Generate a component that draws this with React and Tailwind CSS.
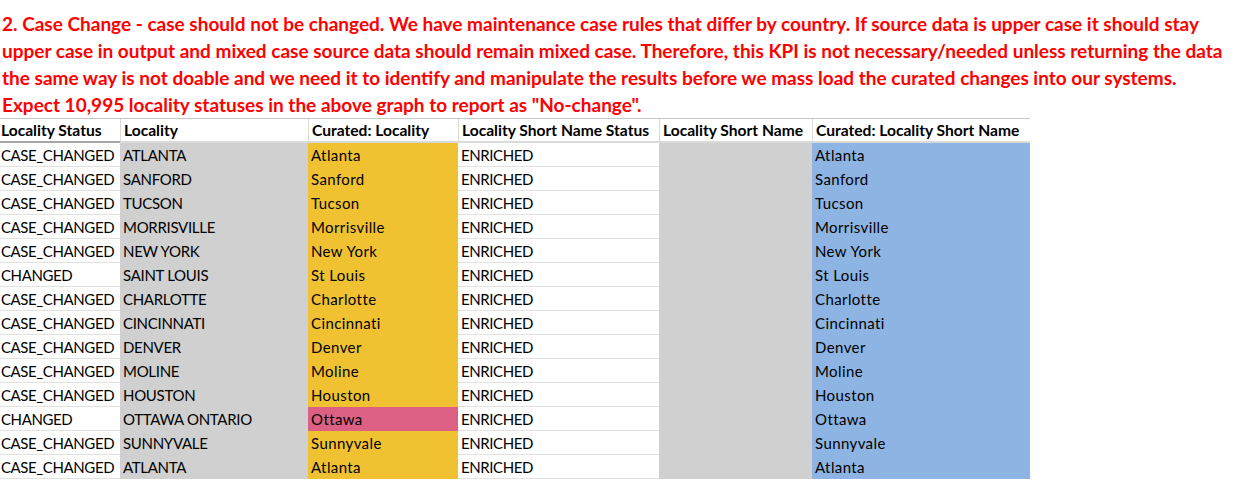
import React from "react";

const rows = [
  ["CASE_CHANGED", "ATLANTA", "Atlanta", "ENRICHED", "", "Atlanta"],
  ["CASE_CHANGED", "SANFORD", "Sanford", "ENRICHED", "", "Sanford"],
  ["CASE_CHANGED", "TUCSON", "Tucson", "ENRICHED", "", "Tucson"],
  ["CASE_CHANGED", "MORRISVILLE", "Morrisville", "ENRICHED", "", "Morrisville"],
  ["CASE_CHANGED", "NEW YORK", "New York", "ENRICHED", "", "New York"],
  ["CHANGED", "SAINT LOUIS", "St Louis", "ENRICHED", "", "St Louis"],
  ["CASE_CHANGED", "CHARLOTTE", "Charlotte", "ENRICHED", "", "Charlotte"],
  ["CASE_CHANGED", "CINCINNATI", "Cincinnati", "ENRICHED", "", "Cincinnati"],
  ["CASE_CHANGED", "DENVER", "Denver", "ENRICHED", "", "Denver"],
  ["CASE_CHANGED", "MOLINE", "Moline", "ENRICHED", "", "Moline"],
  ["CASE_CHANGED", "HOUSTON", "Houston", "ENRICHED", "", "Houston"],
  ["CHANGED", "OTTAWA ONTARIO", "Ottawa", "ENRICHED", "", "Ottawa", true],
  ["CASE_CHANGED", "SUNNYVALE", "Sunnyvale", "ENRICHED", "", "Sunnyvale"],
  ["CASE_CHANGED", "ATLANTA", "Atlanta", "ENRICHED", "", "Atlanta"],
];

const headers = [
  "Locality Status",
  "Locality",
  "Curated: Locality",
  "Locality Short Name Status",
  "Locality Short Name",
  "Curated: Locality Short Name",
];

export default function App() {
  return (
    <div
      className="w-[1238px] h-[488px] bg-white overflow-hidden text-black"
      style={{ fontFamily: "Lato, 'Open Sans', sans-serif" }}
    >
      <div className="pt-[10px] pl-[2px] text-[#ff0000] font-bold text-[19px] leading-[27px] whitespace-nowrap">
        <div>2. Case Change - case should not be changed. We have maintenance case rules that differ by country. If source data is upper case it should stay</div>
        <div>upper case in output and mixed case source data should remain mixed case. Therefore, this KPI is not necessary/needed unless returning the data</div>
        <div>the same way is not doable and we need it to identify and manipulate the results before we mass load the curated changes into our systems.</div>
        <div>Expect 10,995 locality statuses in the above graph to report as "No-change".</div>
      </div>
      <div className="grid grid-cols-[120px_188px_150px_201px_153px_218px] w-[1030px] border-t border-[#c6c6c6] text-[15px] leading-[23px]">
        {headers.map((h, i) => (
          <div
            key={h}
            className={`h-[24px] font-bold text-[15.6px] border-b-2 border-[#a6a6a6] whitespace-nowrap overflow-hidden ${i === 0 ? "pl-[1px]" : "pl-[3px] border-l border-[#dadada]"}`}
          >
            {h}
          </div>
        ))}
        {rows.map((r, ri) => (
          <React.Fragment key={ri}>
            <div className="h-[24px] pt-[1px] pl-[1px] bg-white border-b border-[#e1e1e1] whitespace-nowrap tracking-[-0.4px]">{r[0]}</div>
            <div className="h-[24px] pt-[1px] pl-[3px] bg-[#d0d0d0] whitespace-nowrap tracking-[-0.3px]">{r[1]}</div>
            <div className={`h-[24px] pt-[1px] pl-[3px] whitespace-nowrap tracking-[0.4px] ${r[6] ? "bg-[#dc6083]" : "bg-[#f0c232]"}`}>{r[2]}</div>
            <div className="h-[24px] pt-[1px] pl-[3px] bg-white border-b border-[#e1e1e1] whitespace-nowrap tracking-[-0.4px]">{r[3]}</div>
            <div className="h-[24px] bg-[#d0d0d0]">{r[4]}</div>
            <div className="h-[24px] pt-[1px] pl-[3px] bg-[#8db4e2] whitespace-nowrap tracking-[0.4px]">{r[5]}</div>
          </React.Fragment>
        ))}
      </div>
    </div>
  );
}
